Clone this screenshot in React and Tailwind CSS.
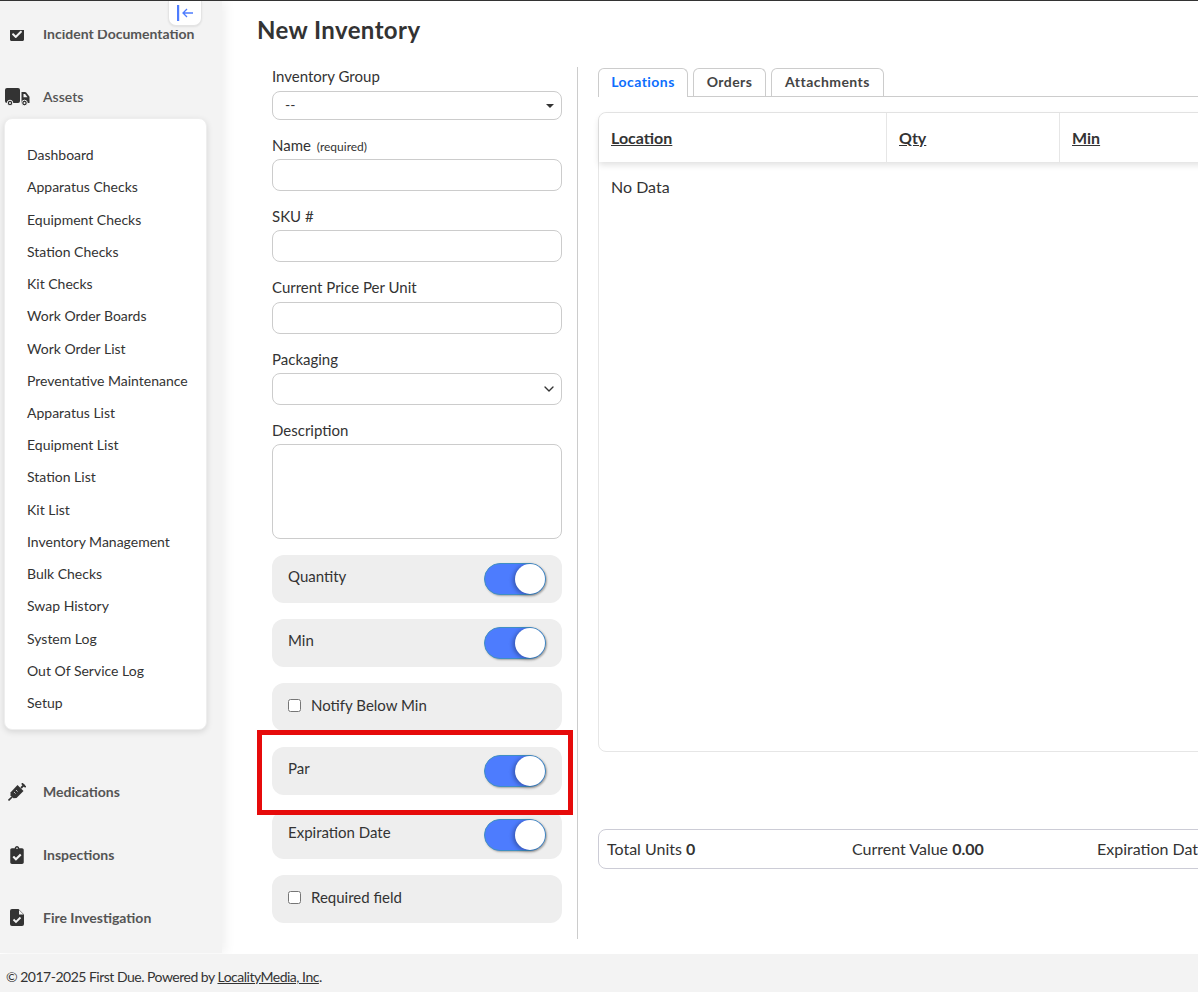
import { FaCheckSquare, FaClipboardCheck } from "react-icons/fa";
import { ChevronDown } from "lucide-react";

const assetLinks = [
  "Dashboard",
  "Apparatus Checks",
  "Equipment Checks",
  "Station Checks",
  "Kit Checks",
  "Work Order Boards",
  "Work Order List",
  "Preventative Maintenance",
  "Apparatus List",
  "Equipment List",
  "Station List",
  "Kit List",
  "Inventory Management",
  "Bulk Checks",
  "Swap History",
  "System Log",
  "Out Of Service Log",
  "Setup",
];

const TruckIcon = () => (
  <svg width="25" height="18" viewBox="0 0 25 18" fill="#333">
    <rect x="0" y="0" width="15" height="15" rx="2" />
    <path d="M16.5 4h3.5a1.5 1.5 0 0 1 1.2.6l3.3 4.2V15h-8z" />
    <path d="M18.5 6h1.6l2.4 3.2h-4z" fill="#f3f3f3" />
    <circle cx="5" cy="15" r="2.8" stroke="#f3f3f3" strokeWidth="1" />
    <circle cx="5" cy="15" r="1" fill="#f3f3f3" />
    <circle cx="19.5" cy="15" r="2.8" stroke="#f3f3f3" strokeWidth="1" />
    <circle cx="19.5" cy="15" r="1" fill="#f3f3f3" />
  </svg>
);

const SyringeIcon = () => (
  <svg width="18" height="18" viewBox="0 0 18 18" fill="#333">
    <path d="M2.5 9.5 9.5 2l6 6-7 7-3 .2-3-3z" />
    <path d="M5 13 0.5 17.5" stroke="#333" strokeWidth="1.6" />
    <path d="M13 5l3.5-3.5M13.8 0.3l3.9 3.9" stroke="#333" strokeWidth="1.8" fill="none" />
    <path d="M8 7l1.6 1.6M6 9l1.6 1.6" stroke="#f3f3f3" strokeWidth="0.8" />
  </svg>
);

const FileCheckIcon = () => (
  <svg width="14" height="17" viewBox="0 0 14 17" fill="#333">
    <path d="M2 0h6.5L14 5.5V15a2 2 0 0 1-2 2H2a2 2 0 0 1-2-2V2a2 2 0 0 1 2-2z" />
    <path d="M9 1v4.5h4.5z" fill="#f3f3f3" />
    <path d="M3.5 10.5 6 13l4.5-4.5" fill="none" stroke="#f3f3f3" strokeWidth="1.8" />
  </svg>
);

const CollapseIcon = () => (
  <svg width="16" height="16" viewBox="0 0 16 16" fill="none" stroke="#4d7cfe">
    <path d="M1 0v16" strokeWidth="2.4" />
    <path d="M16 8H6.5M10 4 6 8l4 4" strokeWidth="1.3" />
  </svg>
);

const Toggle = () => {
  return (
    <div className="flex h-8 w-[62px] shrink-0 justify-end rounded-full border border-[#3f8fc4] bg-[#4d7cfe] shadow-[1px_1px_2px_rgba(0,0,0,0.3)]">
      <div className="h-[30px] w-[30px] rounded-full bg-white shadow-[-2px_1px_4px_rgba(0,0,0,0.3)]" />
    </div>
  );
};

const ToggleRow = ({ label }) => {
  return (
    <div className="mt-4 flex h-12 items-center justify-between rounded-xl bg-[#eee] pl-4 pr-4">
      <span className="-mt-[6px] text-[15px] text-[#333]">{label}</span>
      <Toggle />
    </div>
  );
};

const CheckRow = ({ label }) => {
  return (
    <label className="mt-4 flex h-12 items-center gap-[10px] rounded-xl bg-[#eee] pb-1 pl-4 text-[15px] text-[#333]">
      <input type="checkbox" className="h-[13px] w-[13px]" />
      {label}
    </label>
  );
};

const SideRow = ({ icon, label }) => {
  return (
    <div className="flex h-[63px] items-center">
      <div className="flex w-[43px] justify-center pr-[9px] text-[#333]">{icon}</div>
      <span className="text-sm font-bold text-[#555]">{label}</span>
    </div>
  );
};

const Sidebar = () => {
  return (
    <aside className="relative z-10 h-[952px] w-[222px] shrink-0 bg-[#f3f3f3] pt-[29px] shadow-[4px_0_10px_rgba(0,0,0,0.06)]">
      <button className="absolute left-[168px] top-0 flex h-[25px] w-[34px] items-center justify-center rounded-b-lg border border-t-0 border-[#e4e4e4] bg-white pr-[1px] shadow-[0_1px_2px_rgba(0,0,0,0.08)]">
        <CollapseIcon />
      </button>
      <div className="h-[16px] overflow-hidden">
        <div className="-mt-[7px] flex h-[21px] items-center">
          <div className="flex w-[43px] justify-center pr-[9px] text-[#333]">
            <FaCheckSquare size={16} />
          </div>
          <span className="text-sm font-bold text-[#555]">Incident Documentation</span>
        </div>
      </div>
      <div className="mb-[11px] mt-[40px] flex h-[21px] items-center">
        <div className="flex w-[43px] justify-start pl-[5px]">
          <TruckIcon />
        </div>
        <span className="text-sm font-semibold text-[#555]">Assets</span>
      </div>
      <ul className="ml-1 w-[203px] rounded-lg border border-[#eee] bg-white pb-[10px] pt-5 text-sm text-[#333] shadow-[0_2px_6px_rgba(0,0,0,0.12)]">
        {assetLinks.map((item) => (
          <li key={item} className="flex h-[32.24px] items-center pl-[22px]">
            {item}
          </li>
        ))}
      </ul>
      <div className="mt-[30px]">
        <SideRow icon={<SyringeIcon />} label="Medications" />
        <SideRow icon={<FaClipboardCheck size={18} />} label="Inspections" />
        <SideRow icon={<FileCheckIcon />} label="Fire Investigation" />
      </div>
    </aside>
  );
};

const InventoryForm = () => {
  return (
    <div className="ml-[15px] h-[872px] w-[306px] shrink-0 border-r border-[#ccc] pr-[15px]">
      <div className="mb-[6px] h-[18px] text-[15px] leading-[18px] text-[#333]">Inventory Group</div>
      <div className="relative">
        <select className="h-[29px] w-full appearance-none rounded-lg border border-[#ccc] bg-white pb-[2px] pl-3 text-sm text-[#333]">
          <option>--</option>
        </select>
        <span className="absolute right-[8px] top-[13px] h-0 w-0 border-x-[4px] border-t-[4px] border-x-transparent border-t-[#333]" />
      </div>

      <div className="mb-[5px] mt-4 h-[18px] text-[15px] leading-[18px] text-[#333]">
        Name <span className="ml-[2px] text-xs">(required)</span>
      </div>
      <input className="block h-8 w-full rounded-lg border border-[#ccc] bg-white" />

      <div className="mb-[5px] mt-4 h-[18px] text-[15px] leading-[18px] text-[#333]">SKU #</div>
      <input className="block h-8 w-full rounded-lg border border-[#ccc] bg-white" />

      <div className="mb-[6px] mt-4 h-[18px] text-[15px] leading-[18px] text-[#333]">Current Price Per Unit</div>
      <input className="block h-8 w-full rounded-lg border border-[#ccc] bg-white" />

      <div className="mb-[5px] mt-4 h-[18px] text-[15px] leading-[18px] text-[#333]">Packaging</div>
      <div className="relative">
        <select className="block h-8 w-full appearance-none rounded-lg border border-[#ccc] bg-white" />
        <ChevronDown size={16} strokeWidth={2} className="absolute right-[5px] top-[8px] text-[#333]" />
      </div>

      <div className="mb-[5px] mt-4 h-[18px] text-[15px] leading-[18px] text-[#333]">Description</div>
      <textarea className="block h-[95px] w-full resize-none rounded-lg border border-[#ccc] bg-white" />

      <ToggleRow label="Quantity" />
      <ToggleRow label="Min" />
      <CheckRow label="Notify Below Min" />
      <ToggleRow label="Par" />
      <ToggleRow label="Expiration Date" />
      <CheckRow label="Required field" />
    </div>
  );
};

const LocationsPanel = () => {
  return (
    <div className="ml-5 w-[735px] shrink-0">
      <div className="flex h-[30px] gap-[5px] border-b border-[#ccc] pt-px text-sm font-bold tracking-[0.45px] text-[#444]">
        <div className="flex h-[29px] w-[90px] items-center justify-center rounded-t-md border border-b-0 border-[#ccc] bg-white pb-[2px] text-[#0d6efd]">
          Locations
        </div>
        <div className="flex h-[28px] w-[73px] items-center justify-center rounded-t-md border border-b-0 border-[#ccc] pb-[2px]">Orders</div>
        <div className="flex h-[28px] w-[113px] items-center justify-center rounded-t-md border border-b-0 border-[#ccc] pb-[2px]">Attachments</div>
      </div>
      <div className="mt-[15px] h-[640px] rounded-lg border border-[#e6e6e6]">
        <div className="flex h-[49px] rounded-t-lg bg-white text-base font-bold text-[#333] underline shadow-[0_3px_6px_rgba(0,0,0,0.12)]">
          <div className="flex w-[288px] items-center border-r border-[#e6e6e6] pl-3">Location</div>
          <div className="flex w-[173px] items-center border-r border-[#e6e6e6] pl-3">Qty</div>
          <div className="flex items-center pl-3">Min</div>
        </div>
        <div className="pl-3 pt-[13px] text-base text-[#333]">No Data</div>
      </div>
      <div className="mt-[77px] grid h-10 grid-cols-[245px_245px_245px] items-center rounded-lg border border-[#ccccd6] pl-2 text-base text-[#333]">
        <div>
          Total Units <b>0</b>
        </div>
        <div>
          Current Value <b>0.00</b>
        </div>
        <div className="whitespace-nowrap">Expiration Date</div>
      </div>
    </div>
  );
};

export default function App() {
  return (
    <div className="relative flex h-[992px] w-[1198px] flex-col overflow-hidden border-t border-[#333] bg-white [font-family:Lato,sans-serif]">
      <div className="flex h-[953px] overflow-hidden">
        <Sidebar />
        <main className="min-w-0 flex-1 pl-[35px]">
          <div className="flex h-[66px] items-start pt-[14px]">
            <h1 className="text-2xl font-bold leading-[30px] tracking-[0.4px] text-[#333]">New Inventory</h1>
          </div>
          <div className="flex">
            <InventoryForm />
            <LocationsPanel />
          </div>
        </main>
      </div>
      <footer className="flex h-[38px] items-center bg-[#f3f3f3] pl-[6px] pt-2 text-sm tracking-[-0.5px] text-[#333]">
        <span>
          © 2017-2025 First Due. Powered by <span className="underline">LocalityMedia, Inc</span>.
        </span>
      </footer>
      {/* red highlight around the Par row */}
      <div className="pointer-events-none absolute left-[257px] top-[729px] h-[85px] w-[316px] border-[5px] border-[#e60b0b]" />
    </div>
  );
}
